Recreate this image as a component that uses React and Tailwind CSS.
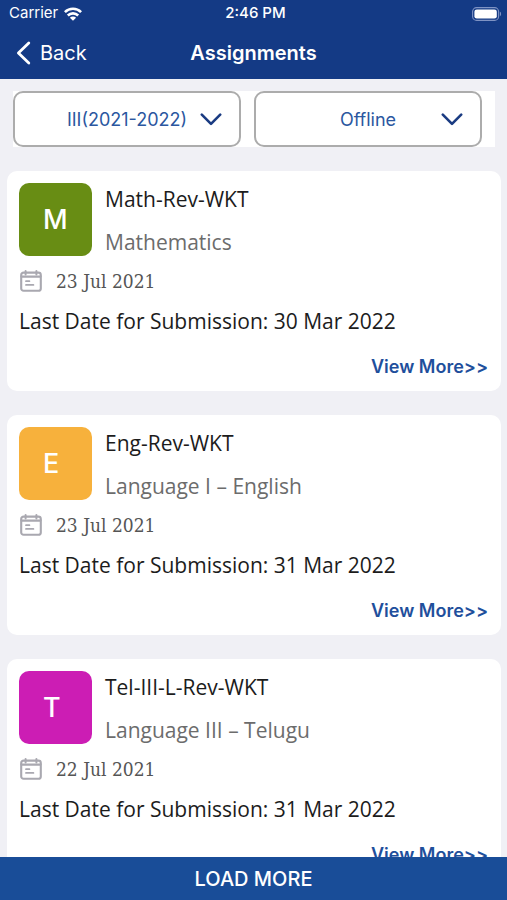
import { useState } from 'react';

const assignments = [
  {
    id: 1,
    letter: 'M',
    color: 'bg-[#688d14]',
    title: 'Math-Rev-WKT',
    subject: 'Mathematics',
    date: '23 Jul 2021',
    lastDate: '30 Mar 2022',
  },
  {
    id: 2,
    letter: 'E',
    color: 'bg-[#f7b13c]',
    title: 'Eng-Rev-WKT',
    subject: 'Language I – English',
    date: '23 Jul 2021',
    lastDate: '31 Mar 2022',
  },
  {
    id: 3,
    letter: 'T',
    color: 'bg-[#cc1db4]',
    title: 'Tel-III-L-Rev-WKT',
    subject: 'Language III – Telugu',
    date: '22 Jul 2021',
    lastDate: '31 Mar 2022',
  },
];

function WifiIcon() {
  return (
    <svg viewBox="0 0 18 14" className="w-[18px] h-[14px]" aria-hidden="true">
      <g fill="none" stroke="currentColor" strokeWidth="2.6">
        <path d="M0.9 5.1a11.5 11.5 0 0 1 16.2 0" />
        <path d="M3.8 8.5a7.4 7.4 0 0 1 10.4 0" />
      </g>
      <path d="M9 13.8L5.9 10.8a4.4 4.4 0 0 1 6.2 0z" fill="currentColor" />
    </svg>
  );
}

function BatteryIcon() {
  return (
    <svg viewBox="0 0 30 14" className="w-[30px] h-[14px]" aria-hidden="true">
      <rect x="0.6" y="0.6" width="26" height="12.8" rx="4" fill="none" stroke="#7f93c4" strokeWidth="1.1" />
      <rect x="2.4" y="2.4" width="22.4" height="9.2" rx="2.4" fill="#fff" />
      <path d="M27.9 4.8c1.6.6 1.6 3.8 0 4.4z" fill="#7f93c4" />
    </svg>
  );
}

function CalendarIcon() {
  return (
    <svg viewBox="0 0 22 22" className="w-[22px] h-[22px] text-[#a9a8b0]" aria-hidden="true">
      <g fill="none" stroke="currentColor" strokeLinecap="round">
        <rect x="1.2" y="2.6" width="19.6" height="18.2" rx="2.4" strokeWidth="2.1" />
        <path d="M1.5 6.6h19" strokeWidth="2.2" />
        <path d="M5.6 1v3.4M16.4 1v3.4" strokeWidth="2" />
        <path d="M6 11.2h3.4M6 14.9h7.4" strokeWidth="1.8" />
      </g>
    </svg>
  );
}

function FilterSelect({ id, label, value, options, onChange }) {
  return (
    <div className="relative">
      <label htmlFor={id} className="sr-only">
        {label}
      </label>
      <select
        id={id}
        value={value}
        onChange={(e) => onChange(e.target.value)}
        className="block w-full h-14 appearance-none rounded-[10px] border-2 border-[#acacac] bg-white pt-px text-lg leading-8 text-[#2b57a0] text-center [text-align-last:center]"
      >
        {options.map((o) => (
          <option key={o} value={o}>
            {o}
          </option>
        ))}
      </select>
      <svg
        viewBox="0 0 22 13"
        className="absolute right-[19px] top-[22px] w-[22px] h-[13px] pointer-events-none"
        aria-hidden="true"
      >
        <path
          d="M1.8 1.6L11 10.8l9.2-9.2"
          fill="none"
          stroke="#1a3b82"
          strokeWidth="2.6"
          strokeLinecap="round"
          strokeLinejoin="round"
        />
      </svg>
    </div>
  );
}

function AssignmentCard({ item }) {
  return (
    <li className="shrink-0 rounded-[10px] bg-white px-3 pt-3 pb-[10px] font-['Open_Sans',sans-serif]">
      <div className="flex gap-[13px]">
        <div
          className={`flex items-center size-[73px] shrink-0 rounded-[10px] pl-6 pt-[2px] text-white text-[27px] font-['Inter',sans-serif] font-medium ${item.color}`}
        >
          {item.letter}
        </div>
        <div>
          <h2 className="text-[21px] leading-8 text-[#1c1c1c]">{item.title}</h2>
          <p className="mt-[11px] text-[21px] leading-8 text-[#6c6c6c]">{item.subject}</p>
        </div>
      </div>
      <div className="mt-[9px] flex items-center gap-[14px] pl-px">
        <CalendarIcon />
        <span className="text-[19px] leading-7 text-[#555] font-['DejaVu_Serif_Condensed','DejaVu_Serif',serif]">
          {item.date}
        </span>
      </div>
      <p className="mt-[10px] text-[21px] leading-8 text-[#1c1c1c]">
        Last Date for Submission: {item.lastDate}
      </p>
      <div className="mt-4 flex justify-end pr-px">
        <a href="#" className="text-lg leading-7 font-semibold text-[#1f4f9c] font-['Inter',sans-serif]">
          View More&gt;&gt;
        </a>
      </div>
    </li>
  );
}

export default function App() {
  const [year, setYear] = useState('III(2021-2022)');
  const [mode, setMode] = useState('Offline');

  return (
    <div className="flex h-screen flex-col overflow-hidden bg-[#f0f0f5] font-['Inter',sans-serif]">
      <header className="shrink-0 bg-[#143a85] text-white">
        <div className="grid grid-cols-3 items-center h-[27px] pl-[9px] pr-[5px] text-[15px]">
          <div className="flex items-center gap-[6px]">
            <span>Carrier</span>
            <WifiIcon />
          </div>
          <span className="text-center font-medium">2:46 PM</span>
          <div className="flex justify-end">
            <BatteryIcon />
          </div>
        </div>
        <div className="grid grid-cols-3 items-center h-[52px] px-4">
          <button type="button" className="flex items-center gap-[9px] text-xl">
            <svg viewBox="0 0 15 24" className="w-[15px] h-6" aria-hidden="true">
              <path
                d="M12.8 2L2.4 12l10.4 10"
                fill="none"
                stroke="currentColor"
                strokeWidth="2.8"
                strokeLinecap="round"
                strokeLinejoin="round"
              />
            </svg>
            Back
          </button>
          <h1 className="text-center text-xl font-semibold">Assignments</h1>
        </div>
      </header>

      <div className="mt-3 ml-[13px] mr-3 shrink-0 grid grid-cols-2 gap-[13px] bg-white pr-[13px]">
        <FilterSelect
          id="year"
          label="Academic year"
          value={year}
          options={['III(2021-2022)', 'II(2020-2021)']}
          onChange={setYear}
        />
        <FilterSelect
          id="mode"
          label="Mode"
          value={mode}
          options={['Offline', 'Online']}
          onChange={setMode}
        />
      </div>

      <ul className="flex min-h-0 flex-1 flex-col gap-6 overflow-hidden pt-6 pl-[7px] pr-[6px]">
        {assignments.map((a) => (
          <AssignmentCard key={a.id} item={a} />
        ))}
      </ul>

      <button
        type="button"
        className="h-[43px] shrink-0 w-full bg-[#194d98] text-xl font-medium text-white"
      >
        LOAD MORE
      </button>
    </div>
  );
}
